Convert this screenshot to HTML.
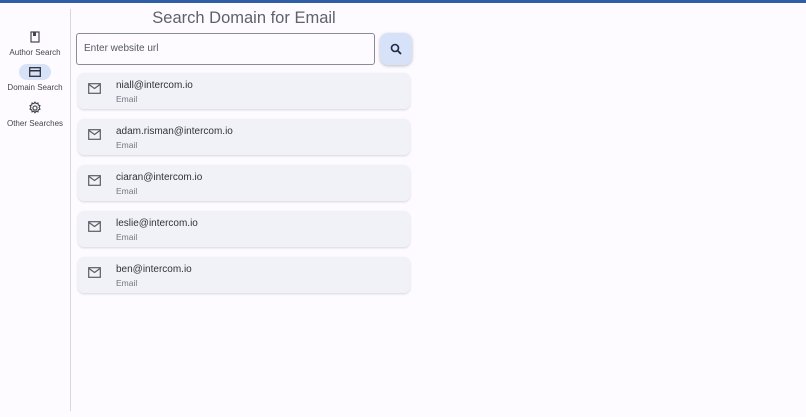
<!DOCTYPE html><html><head><style>
body{margin:0;width:806px;height:417px;background:#fdfbff;font-family:"Liberation Sans",sans-serif;position:relative;overflow:hidden}
.top{position:absolute;left:0;top:0;width:806px;height:3px;background:#2f5ea6}
.side{position:absolute;left:70px;top:9px;width:1px;height:402px;background:#d8d8dc}
.nav{position:absolute;left:0;width:70px;text-align:center;font-size:8px;color:#44474e}
.nav .ic{height:16px;margin:0 auto 3px;display:flex;align-items:center;justify-content:center}
.pill{width:32px;height:16px;border-radius:8px;background:#d7e2f8}
h1{position:absolute;left:76px;width:336px;top:9px;margin:0;font-weight:400;font-size:16.5px;color:#5f6268;text-align:center}
.inp{position:absolute;left:76px;top:33px;border:1px solid #8a8d93;border-radius:3px;font-size:10px;color:#55585e;line-height:30px;padding-left:7px;box-sizing:border-box;width:299px;height:32px}
.btn{position:absolute;left:380px;top:33px;width:32px;height:32px;border-radius:8px;background:#d7e2f8;box-shadow:0 1px 3px rgba(0,0,0,.25);display:flex;align-items:center;justify-content:center}
.card{position:absolute;left:78px;width:332px;height:36px;border-radius:6px;background:#f1f2f8;box-shadow:0 1px 2px rgba(0,0,0,.15)}
.card svg{position:absolute;left:10px;top:10px}
.card .t{position:absolute;left:38px;top:7px;font-size:10px;color:#303338}
.card .s{position:absolute;left:38px;top:21px;font-size:8.5px;color:#74777d}
</style></head><body>
<div class="top"></div><div class="side"></div>
<div class="nav" style="top:29px"><div class="ic"><svg width="12" height="12" viewBox="0 0 12 12"><rect x="2" y="1" width="8" height="10" fill="none" stroke="#44474e" stroke-width="1.2"/><rect x="4" y="1" width="3" height="4" fill="#44474e"/></svg></div>Author Search</div>
<div class="nav" style="top:64px"><div class="ic"><div class="pill" style="display:flex;align-items:center;justify-content:center"><svg width="12" height="10" viewBox="0 0 12 10"><rect x="0.7" y="0.7" width="10.6" height="8.6" fill="none" stroke="#303338" stroke-width="1.3"/><rect x="1" y="3" width="10" height="1.5" fill="#303338"/></svg></div></div>Domain Search</div>
<div class="nav" style="top:100px"><div class="ic"><svg width="14" height="14" viewBox="0 0 24 24"><path fill="none" stroke="#44474e" stroke-width="2" d="M12 2l2 2.5 3-1 .5 3.2 3 1.3-1.5 3 1.5 3-3 1.3-.5 3.2-3-1-2 2.5-2-2.5-3 1-.5-3.2-3-1.3 1.5-3-1.5-3 3-1.3.5-3.2 3 1z"/><circle cx="12" cy="12" r="3.5" fill="none" stroke="#44474e" stroke-width="2"/></svg></div>Other Searches</div>
<h1>Search Domain for Email</h1>
<div class="inp">Enter website url</div>
<div class="btn"><svg width="12" height="12" viewBox="0 0 12 12"><circle cx="5" cy="5" r="3.5" fill="none" stroke="#1c2a44" stroke-width="1.6"/><path d="M7.5 7.5L11 11" stroke="#1c2a44" stroke-width="1.8"/></svg></div>
<div class="card" style="top:73px"><svg width="13" height="11" viewBox="0 0 13 11"><rect x="0.7" y="0.7" width="11.6" height="9.6" fill="none" stroke="#5a5d63" stroke-width="1.2"/><path d="M1 1.5l5.5 4 5.5-4" fill="none" stroke="#5a5d63" stroke-width="1.2"/></svg><div class="t">niall@intercom.io</div><div class="s">Email</div></div>
<div class="card" style="top:119px"><svg width="13" height="11" viewBox="0 0 13 11"><rect x="0.7" y="0.7" width="11.6" height="9.6" fill="none" stroke="#5a5d63" stroke-width="1.2"/><path d="M1 1.5l5.5 4 5.5-4" fill="none" stroke="#5a5d63" stroke-width="1.2"/></svg><div class="t">adam.risman@intercom.io</div><div class="s">Email</div></div>
<div class="card" style="top:165px"><svg width="13" height="11" viewBox="0 0 13 11"><rect x="0.7" y="0.7" width="11.6" height="9.6" fill="none" stroke="#5a5d63" stroke-width="1.2"/><path d="M1 1.5l5.5 4 5.5-4" fill="none" stroke="#5a5d63" stroke-width="1.2"/></svg><div class="t">ciaran@intercom.io</div><div class="s">Email</div></div>
<div class="card" style="top:211px"><svg width="13" height="11" viewBox="0 0 13 11"><rect x="0.7" y="0.7" width="11.6" height="9.6" fill="none" stroke="#5a5d63" stroke-width="1.2"/><path d="M1 1.5l5.5 4 5.5-4" fill="none" stroke="#5a5d63" stroke-width="1.2"/></svg><div class="t">leslie@intercom.io</div><div class="s">Email</div></div>
<div class="card" style="top:257px"><svg width="13" height="11" viewBox="0 0 13 11"><rect x="0.7" y="0.7" width="11.6" height="9.6" fill="none" stroke="#5a5d63" stroke-width="1.2"/><path d="M1 1.5l5.5 4 5.5-4" fill="none" stroke="#5a5d63" stroke-width="1.2"/></svg><div class="t">ben@intercom.io</div><div class="s">Email</div></div>
</body></html>
